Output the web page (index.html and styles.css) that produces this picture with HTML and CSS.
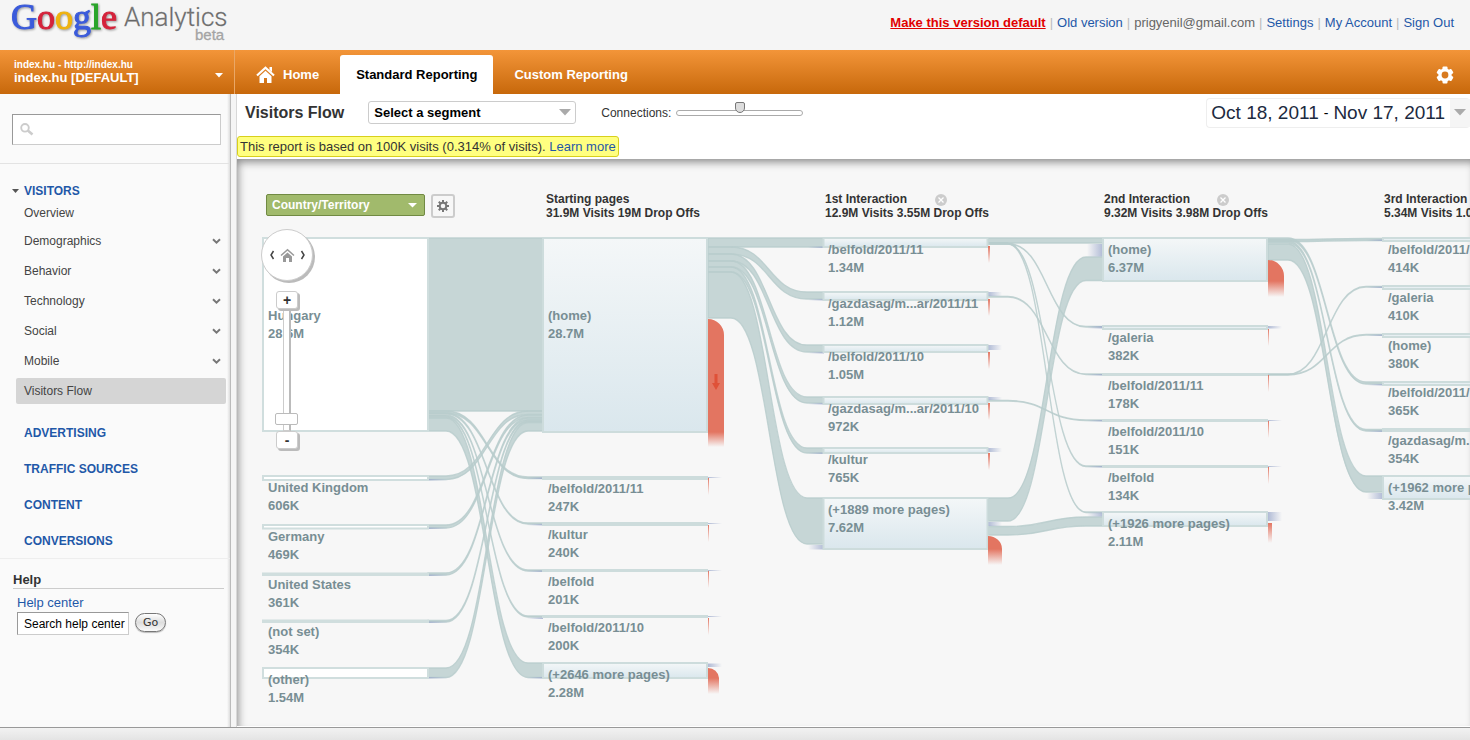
FILE: index.html
```html
<!DOCTYPE html>
<html lang="en">
<head>
<meta charset="utf-8">
<title>Visitors Flow - Google Analytics</title>
<link rel="stylesheet" href="styles.css">
</head>
<body>
<header class="top">
  <svg class="logo" width="232" height="46" role="img" aria-label="Google Analytics beta">
    <text class="logo-google" x="11" y="29"><tspan fill="#3b5bdb" stroke="#3b5bdb">G</tspan><tspan fill="#d5233b" stroke="#d5233b">o</tspan><tspan fill="#efb310" stroke="#efb310">o</tspan><tspan fill="#3b5bdb" stroke="#3b5bdb">g</tspan><tspan fill="#2ba52b" stroke="#2ba52b">l</tspan><tspan fill="#d5233b" stroke="#d5233b">e</tspan></text>
    <text class="logo-product" x="124" y="26">Analytics</text>
    <text class="logo-beta" x="195" y="40">beta</text>
  </svg>
  <nav class="account-links">
    <a class="promo" href="#">Make this version default</a><i>|</i><a href="#">Old version</a><i>|</i><span>prigyenil@gmail.com</span><i>|</i><a href="#">Settings</a><i>|</i><a href="#">My Account</a><i>|</i><a href="#">Sign Out</a>
  </nav>
</header>

<div class="bar">
  <button class="profile" type="button">
    <span class="profile-names"><small>index.hu - http://index.hu</small><b>index.hu [DEFAULT]</b></span>
    <svg width="8" height="5"><path d="M0 0h8L4 4.500z" fill="#fff"/></svg>
  </button>
  <nav class="tabs">
    <a class="tab tab-home" href="#"><svg width="19" height="17" viewBox="0 0 19 17"><path d="M1 9.500 9.500 1.800 18 9.500" fill="none" stroke="#fff" stroke-width="2.200"/><path d="M13.500 1h2.500v5l-2.500-2zM3.500 10.200l6-5.400 6 5.400V17H11v-5H8v5H3.500z" fill="#fff"/></svg>Home</a>
    <a class="tab tab-active" href="#">Standard Reporting</a>
    <a class="tab" href="#">Custom Reporting</a>
  </nav>
  <button class="settings" type="button" aria-label="Settings">
    <svg width="18" height="18" viewBox="-9 -9 18 18"><g fill="#fff"><rect x="-2.500" y="-8.500" width="5" height="17" rx="1"/><rect x="-2.500" y="-8.500" width="5" height="17" rx="1" transform="rotate(60)"/><rect x="-2.500" y="-8.500" width="5" height="17" rx="1" transform="rotate(120)"/><circle r="6.700"/></g><circle r="3.400" fill="#d87a1f"/></svg>
  </button>
</div>

<div class="body">
  <aside class="side">
    <div class="search-wrap">
      <label class="search"><svg width="14" height="13" viewBox="0 0 14 13"><circle cx="5" cy="4.800" r="3.800" fill="none" stroke="#ccc" stroke-width="1.900"/><path d="M7.800 7.500 12.500 11.500" stroke="#ccc" stroke-width="2.600"/></svg><input type="text" aria-label="Find report"></label>
    </div>
    <nav class="menu">
      <a class="group group-open" href="#"><svg width="7" height="4"><path d="M0 0h7L3.500 4z" fill="#555"/></svg>VISITORS</a>
      <a class="item item-first" href="#">Overview</a>
      <a class="item" href="#">Demographics<svg width="9" height="7"><path d="M1 1.200l3.500 3.500L8 1.200" /></svg></a>
      <a class="item" href="#">Behavior<svg width="9" height="7"><path d="M1 1.200l3.500 3.500L8 1.200" /></svg></a>
      <a class="item" href="#">Technology<svg width="9" height="7"><path d="M1 1.200l3.500 3.500L8 1.200" /></svg></a>
      <a class="item" href="#">Social<svg width="9" height="7"><path d="M1 1.200l3.500 3.500L8 1.200" /></svg></a>
      <a class="item" href="#">Mobile<svg width="9" height="7"><path d="M1 1.200l3.500 3.500L8 1.200" /></svg></a>
      <a class="item item-on" href="#">Visitors Flow</a>
      <div class="groups">
        <a class="group" href="#">ADVERTISING</a>
        <a class="group" href="#">TRAFFIC SOURCES</a>
        <a class="group" href="#">CONTENT</a>
        <a class="group" href="#">CONVERSIONS</a>
      </div>
    </nav>
    <section class="help">
      <h2>Help</h2>
      <a href="#">Help center</a>
      <form class="help-form"><input type="text" value="Search help center" aria-label="Search help center"><button type="button">Go</button></form>
    </section>
  </aside>

  <main class="main">
    <div class="report-head">
      <h1>Visitors Flow</h1>
      <div class="segment"><select aria-label="Segment"><option>Select a segment</option></select><svg width="12" height="7"><path d="M0 0h12L6 6.500z" fill="#aaa"/></svg></div>
      <label class="connections">Connections:<input type="range" min="0" max="100" value="50"></label>
      <button class="dates" type="button"><span>Oct 18, 2011</span><em>-</em><span>Nov 17, 2011</span><i><svg width="12" height="7"><path d="M0 0h12L6 6.500z" fill="#aaa"/></svg></i></button>
    </div>
    <p class="notice">This report is based on 100K visits (0.314% of visits). <a href="#">Learn more</a></p>

    <div class="canvas">
      <svg class="flow" width="100%" height="567">
        <defs>
          <linearGradient id="node" x1="0" y1="0" x2="0" y2="1"><stop offset="0" stop-color="#f4f7f8"/><stop offset="1" stop-color="#dae7ed"/></linearGradient>
          <linearGradient id="fade-r"><stop offset="0" stop-color="#98a6ca"/><stop offset="1" stop-color="#98a6ca" stop-opacity="0"/></linearGradient>
          <linearGradient id="fade-l"><stop offset="0" stop-color="#98a6ca" stop-opacity="0"/><stop offset="1" stop-color="#98a6ca"/></linearGradient>
          <linearGradient id="fade-d" x1="0" y1="0" x2="0" y2="1"><stop offset="0" stop-color="#e37561"/><stop offset="1" stop-color="#e37561" stop-opacity="0"/></linearGradient>
        </defs>
        <g transform="translate(-237 -159)">
          <g class="link">
            <path d="M428 238H543V411H428z"/>
            <path d="M428 411H446C487 411 487 477 528 477H543V478.500H528C487 478.500 487 413 446 413H428z"/>
            <path d="M428 413H446C487 413 487 523 528 523H543V524H528C487 524 487 414 446 414H428z"/>
            <path d="M428 415H446C487 415 487 570 528 570H543V571H528C487 571 487 416 446 416H428z"/>
            <path d="M428 416.500H446C487 416.500 487 616 528 616H543V617H528C487 617 487 417.500 446 417.500H428z"/>
            <path d="M428 418H446C487 418 487 663 528 663H543V677.500H528C487 677.500 487 431 446 431H428z"/>
            <path d="M428 476H446C487 476 487 411 528 411H543V414.500H528C487 414.500 487 479.500 446 479.500H428z"/>
            <path d="M428 525H446C487 525 487 415 528 415H543V417.500H528C487 417.500 487 528 446 528H428z"/>
            <path d="M428 573H446C487 573 487 418 528 418H543V420H528C487 420 487 575 446 575H428z"/>
            <path d="M428 620.500H446C487 620.500 487 420.500 528 420.500H543V422H528C487 422 487 622 446 622H428z"/>
            <path d="M428 668H446C487 668 487 422.500 528 422.500H543V431H528C487 431 487 677.500 446 677.500H428z"/>

            <path d="M708 238H824V247H708z"/>
            <path d="M708 247H731C769 247 769 292 807 292H824V299H807C769 299 769 254 731 254H708z"/>
            <path d="M708 254H731C769 254 769 345 807 345H824V352H807C769 352 769 261 731 261H708z"/>
            <path d="M708 261H731C769 261 769 397 807 397H824V403H807C769 403 769 267 731 267H708z"/>
            <path d="M708 267H731C769 267 769 448 807 448H824V453H807C769 453 769 272 731 272H708z"/>
            <path d="M708 272H731C769 272 769 498 807 498H824V544H807C769 544 769 318 731 318H708z"/>

            <path d="M988 238H1103V243H988z"/>
            <path d="M988 243.500H1008C1047 243.500 1047 326.500 1086 326.500H1103V327H1086C1047 327 1047 244 1008 244H988z"/>
            <path d="M988 243.500H1008C1047 243.500 1047 466 1086 466H1103V466.500H1086C1047 466.500 1047 244 1008 244H988z"/>
            <path d="M988 243.500H1008C1047 243.500 1047 512 1086 512H1103V512.500H1086C1047 512.500 1047 244 1008 244H988z"/>
            <path d="M988 296.500H1008C1047 296.500 1047 374 1086 374H1103V374.500H1086C1047 374.500 1047 297 1008 297H988z"/>
            <path d="M988 400.500H1008C1047 400.500 1047 420 1086 420H1103V420.500H1086C1047 420.500 1047 401 1008 401H988z"/>
            <path d="M988 498H1008C1047 498 1047 257 1086 257H1103V280.500H1086C1047 280.500 1047 521 1008 521H988z"/>
            <path d="M988 526.500H1008C1047 526.500 1047 517 1086 517H1103V526H1086C1047 526 1047 535 1008 535H988z"/>

            <path d="M1268 239.500H1288C1327 239.500 1327 238.500 1366 238.500H1383V240.500H1366C1327 240.500 1327 241.500 1288 241.500H1268z"/>
            <path d="M1268 238H1288C1327 238 1327 382 1366 382H1383V384H1366C1327 384 1327 240 1288 240H1268z"/>
            <path d="M1268 241H1288C1327 241 1327 429.500 1366 429.500H1383V431H1366C1327 431 1327 243 1288 243H1268z"/>
            <path d="M1268 244H1288C1327 244 1327 476 1366 476H1383V492H1366C1327 492 1327 260 1288 260H1268z"/>
            <path d="M1268 374H1288C1327 374 1327 286.500 1366 286.500H1383V287H1366C1327 287 1327 374.500 1288 374.500H1268z"/>
            <path d="M1268 374.500H1288C1327 374.500 1327 334.500 1366 334.500H1383V335H1366C1327 335 1327 375 1288 375H1268z"/>
          </g>

          <g class="in">
            <path d="M527 477.500h16v1.500h-16zM527 524h16v1.500h-16zM527 570.500h16v1.500h-16zM527 617.500h16v1.500h-16zM527 677h16v1.500h-16z"/>
            <path d="M808 246.500h16v1.500h-16zM808 299h16v1.500h-16zM808 352h16v1.500h-16zM808 403h16v1.500h-16zM808 452.500h16v1.500h-16zM808 545h16v4.500h-16z"/>
            <path d="M1087 244h16v12.500h-16zM1087 326h16v2.500h-16zM1087 374h16v1.500h-16zM1087 420h16v1.500h-16zM1087 466h16v1.500h-16zM1087 512.500h16v4h-16z"/>
            <path d="M1367 239.500h16v1.500h-16zM1367 286.500h16v1.500h-16zM1367 334.500h16v1.500h-16zM1367 384h16v1.500h-16zM1367 430.500h16v1.500h-16zM1367 493h16v6h-16z"/>
          </g>
          <g class="out">
            <path d="M428 479h20v1.500h-20zM428 527.500h20v1.500h-20zM428 574.500h20v1.500h-20zM428 621.500h20v1.500h-20zM428 677h20v1.500h-20z"/>
            <path d="M708 477h14v1h-14zM708 523h14v1h-14zM708 570h14v1h-14zM708 616h14v1h-14zM708 663.500h14v3.500h-14z"/>
            <path d="M988 292h14v4h-14zM988 345h14v5h-14zM988 397h14v3h-14zM988 448h14v4h-14zM988 522h14v4h-14z"/>
            <path d="M1268 326h14v2.500h-14zM1268 420h14v1h-14zM1268 466h14v1h-14zM1268 512h14v9h-14z"/>
          </g>

          <g class="country">
            <path d="M263 238H428V431H263zM263 476H428V480H263zM263 525H428V528.500H263zM263 573.500H428V575H263zM263 620.500H428V622H263zM263 668H428V678H263z"/>
          </g>
          <g class="page">
            <rect x="543" y="238" width="164" height="194"/>
            <rect x="543" y="477" width="164" height="2"/>
            <rect x="543" y="523" width="164" height="2"/>
            <rect x="543" y="570" width="164" height="1"/>
            <rect x="543" y="616" width="164" height="1"/>
            <rect x="543" y="663" width="164" height="15"/>
            <rect x="823.500" y="238" width="164" height="9"/>
            <rect x="823.500" y="292" width="164" height="8"/>
            <rect x="823.500" y="345" width="164" height="7"/>
            <rect x="823.500" y="397" width="164" height="7"/>
            <rect x="823.500" y="448" width="164" height="5"/>
            <rect x="823.500" y="498" width="164" height="51"/>
            <rect x="1103" y="238" width="164" height="43"/>
            <rect x="1103" y="326" width="164" height="3"/>
            <rect x="1103" y="374" width="164" height="1"/>
            <rect x="1103" y="420" width="164" height="1"/>
            <rect x="1103" y="466" width="164" height="1"/>
            <rect x="1103" y="512" width="164" height="14"/>
            <rect x="1383" y="238" width="164" height="3"/>
            <rect x="1383" y="286" width="164" height="3"/>
            <rect x="1383" y="334" width="164" height="3"/>
            <rect x="1383" y="382" width="164" height="3"/>
            <rect x="1383" y="429" width="164" height="2"/>
            <rect x="1383" y="476" width="164" height="23"/>
          </g>

          <g class="drop">
            <path d="M708 319A16 16 0 0 1 724 335V432H708zM708 668A11 11 0 0 1 719 678H708zM988 536A14 13 0 0 1 1002 549H988zM1268 260A16 16 0 0 1 1284 276V281H1268z"/>
            <path d="M714.500 374h3v9h2.500l-4 7-4-7h2.500z" fill="#df5138"/>
          </g>
          <g class="drop-fade">
            <rect x="708" y="432" width="16" height="15"/><rect x="708" y="678" width="11" height="16"/><rect x="988" y="549" width="14" height="16"/><rect x="1268" y="281" width="16" height="16"/><rect x="1268" y="523" width="4" height="20"/>
            <rect x="708" y="478" width="1" height="17"/><rect x="708" y="525" width="1" height="17"/><rect x="708" y="571" width="1" height="17"/><rect x="708" y="618" width="1" height="17"/>
            <rect x="988" y="246" width="2" height="17"/><rect x="988" y="299" width="2" height="17"/><rect x="988" y="352" width="2" height="17"/><rect x="988" y="403" width="2" height="17"/><rect x="988" y="453" width="2" height="17"/>
            <rect x="1268" y="329" width="1" height="17"/><rect x="1268" y="375" width="1" height="17"/><rect x="1268" y="421" width="1" height="17"/><rect x="1268" y="467" width="1" height="17"/>
          </g>

          <g class="label">
            <text x="268" y="320">Hungary</text><text x="268" y="338">28.6M</text>
            <text x="268" y="492">United Kingdom</text><text x="268" y="510">606K</text>
            <text x="268" y="541">Germany</text><text x="268" y="559">469K</text>
            <text x="268" y="589">United States</text><text x="268" y="607">361K</text>
            <text x="268" y="636">(not set)</text><text x="268" y="654">354K</text>
            <text x="268" y="684">(other)</text><text x="268" y="702">1.54M</text>

            <text x="548" y="320">(home)</text><text x="548" y="338">28.7M</text>
            <text x="548" y="493">/belfold/2011/11</text><text x="548" y="511">247K</text>
            <text x="548" y="539">/kultur</text><text x="548" y="557">240K</text>
            <text x="548" y="586">/belfold</text><text x="548" y="604">201K</text>
            <text x="548" y="632">/belfold/2011/10</text><text x="548" y="650">200K</text>
            <text x="548" y="679">(+2646 more pages)</text><text x="548" y="697">2.28M</text>

            <text x="828" y="254">/belfold/2011/11</text><text x="828" y="272">1.34M</text>
            <text x="828" y="308">/gazdasag/m...ar/2011/11</text><text x="828" y="326">1.12M</text>
            <text x="828" y="361">/belfold/2011/10</text><text x="828" y="379">1.05M</text>
            <text x="828" y="413">/gazdasag/m...ar/2011/10</text><text x="828" y="431">972K</text>
            <text x="828" y="464">/kultur</text><text x="828" y="482">765K</text>
            <text x="828" y="514">(+1889 more pages)</text><text x="828" y="532">7.62M</text>

            <text x="1108" y="254">(home)</text><text x="1108" y="272">6.37M</text>
            <text x="1108" y="342">/galeria</text><text x="1108" y="360">382K</text>
            <text x="1108" y="390">/belfold/2011/11</text><text x="1108" y="408">178K</text>
            <text x="1108" y="436">/belfold/2011/10</text><text x="1108" y="454">151K</text>
            <text x="1108" y="482">/belfold</text><text x="1108" y="500">134K</text>
            <text x="1108" y="528">(+1926 more pages)</text><text x="1108" y="546">2.11M</text>

            <text x="1388" y="254">/belfold/2011/11</text><text x="1388" y="272">414K</text>
            <text x="1388" y="302">/galeria</text><text x="1388" y="320">410K</text>
            <text x="1388" y="350">(home)</text><text x="1388" y="368">380K</text>
            <text x="1388" y="397">/belfold/2011/10</text><text x="1388" y="415">365K</text>
            <text x="1388" y="445">/gazdasag/m...ar/2011/11</text><text x="1388" y="463">354K</text>
            <text x="1388" y="492">(+1962 more pages)</text><text x="1388" y="510">3.42M</text>
          </g>
          <g class="heading">
            <text x="546" y="203">Starting pages</text><text x="546" y="217">31.9M Visits 19M Drop Offs</text>
            <text x="825" y="203">1st Interaction</text><text x="825" y="217">12.9M Visits 3.55M Drop Offs</text>
            <text x="1104" y="203">2nd Interaction</text><text x="1104" y="217">9.32M Visits 3.98M Drop Offs</text>
            <text x="1384" y="203">3rd Interaction</text><text x="1384" y="217">5.34M Visits 1.03M Drop Offs</text>
          </g>
        </g>
      </svg>

      <div class="dimension">
        <div class="dimension-pick"><select aria-label="Dimension"><option>Country/Territory</option></select><svg width="9" height="5"><path d="M0 0h9L4.500 4.500z" fill="#fff"/></svg></div>
        <button type="button" aria-label="Dimension settings"><svg width="14" height="14" viewBox="-7 -7 14 14"><g fill="#777"><path d="M-1-6h2V6h-2zM-6-1H6v2H-6z"/><path d="M-1-6h2V6h-2zM-6-1H6v2H-6z" transform="rotate(45)"/></g><circle r="3.300" fill="#f7f7f7" stroke="#777" stroke-width="2"/></svg></button>
      </div>
      <button class="close close-1" type="button" aria-label="Remove 1st Interaction"><svg width="12" height="12"><circle cx="6" cy="6" r="6" fill="#ccc"/><path d="M3.500 3.500l5 5M8.500 3.500l-5 5" stroke="#fff" stroke-width="1.300"/></svg></button>
      <button class="close close-2" type="button" aria-label="Remove 2nd Interaction"><svg width="12" height="12"><circle cx="6" cy="6" r="6" fill="#ccc"/><path d="M3.500 3.500l5 5M8.500 3.500l-5 5" stroke="#fff" stroke-width="1.300"/></svg></button>

      <div class="navigator">
        <div class="pan">
          <button type="button" aria-label="Left"><svg width="6" height="10"><path d="M4.500 1 2 5l2.500 4"/></svg></button>
          <button type="button" aria-label="Home"><svg width="15" height="14" viewBox="0 0 15 14"><path class="roof" d="M1 7.500 7.500 1.700 14 7.500"/><path class="walls" d="M3 8.500l4.500-4L12 8.500V14H9v-4H6v4H3z"/></svg></button>
          <button type="button" aria-label="Right"><svg width="6" height="10"><path d="M1.500 1 4 5 1.500 9"/></svg></button>
        </div>
        <button class="step" type="button">+</button>
        <input class="zoom" type="range" min="0" max="100" value="5" aria-label="Zoom">
        <button class="step" type="button">-</button>
      </div>
    </div>
  </main>
</div>
<footer class="foot"></footer>
</body>
</html>
```
FILE: styles.css
```css
* { box-sizing: border-box; }
body {
  margin: 0;
  min-height: 100vh;
  display: flex;
  flex-direction: column;
  overflow: hidden;
  background: #f5f5f5;
  color: #333;
  font: 13px/16px "Liberation Sans", Arial, sans-serif;
}
a { color: #1f58a8; text-decoration: none; }
button, input, select { font: inherit; color: inherit; margin: 0; }
button { padding: 0; border: 0; background: none; cursor: pointer; }
svg { display: block; flex: none; }

/* Header */
.top { display: flex; justify-content: space-between; height: 50px; padding-right: 16px; }
.logo-google { font: 36px "Liberation Serif", serif; stroke-width: 1px; filter: drop-shadow(1px 1px 1px #999); }
.logo-product { font: 300 26px Roboto, sans-serif; fill: #666; stroke: #888; stroke-width: 0.3px; }
.logo-beta { font: 15px "Liberation Sans", sans-serif; fill: #a4a4a4; stroke: #a4a4a4; stroke-width: 0.3px; }
.account-links { padding-top: 15px; color: #666; white-space: nowrap; }
.account-links i { padding: 0 4px; color: #bbb; font-style: normal; }
.account-links .promo { color: #e10000; font-weight: bold; text-decoration: underline; }

/* Orange bar */
.bar { display: flex; height: 44px; background: linear-gradient(#f39539, #c7680b); color: #fff; }
.profile {
  display: flex;
  align-items: center;
  justify-content: space-between;
  width: 235px;
  padding: 6px 11px 0 14px;
  border-right: 1px solid #eaa766;
  text-align: left;
}
.profile-names { display: flex; flex-direction: column; align-self: start; padding-top: 3px; }
.profile small { font-size: 10px; line-height: 12px; font-weight: bold; }
.profile b { line-height: 14px; }
.tabs { display: flex; align-items: flex-end; flex: 1; }
.tab { display: flex; align-items: center; gap: 8px; height: 39px; padding: 0 21px; color: #fff; font-weight: bold; }
.tab-active { padding: 0 16px; border-radius: 3px 3px 0 0; background: #fff; color: #000; }
.settings { padding: 6px 16px 0 0; }

/* Sidebar */
.body { display: flex; flex: 1; border-bottom: 1px solid #999; }
.side {
  width: 231px;
  margin-right: 5px;
  flex: none;
  border-right: 1px solid #bbb;
  background: linear-gradient(to left, #ddd, #fafafa 3px);
}
.search-wrap { padding: 20px 9px 18px 12px; border-bottom: 1px solid #e3e3e3; }
.search {
  display: flex;
  align-items: center;
  height: 31px;
  padding: 0 7px;
  border: 1px solid #ccc;
  border-top-color: #999;
  border-left-color: #999;
  background: #fff;
}
.search input { flex: 1; min-width: 0; border: 0; outline: 0; background: none; }
.menu { padding: 19px 4px 9px 0; border-bottom: 1px solid #eee; font-size: 12px; }
.group { display: block; padding-left: 24px; font-weight: bold; }
.group-open { display: flex; align-items: center; gap: 5px; padding-left: 12px; }
.item {
  display: flex;
  align-items: center;
  justify-content: space-between;
  height: 26px;
  margin: 0 0 4px 16px;
  padding: 0 5px 0 8px;
  border-radius: 2px;
  color: #444;
}
.item-first { margin-top: 1px; margin-bottom: 2px; }
.item svg { fill: none; stroke: #777; stroke-width: 2px; }
.item-on { background: #d5d5d5; }
.groups { display: grid; gap: 20px; margin-top: 21px; }
.help { padding: 13px 6px 0 13px; }
.help h2 { margin: 0 0 6px; border-bottom: 1px solid #ccc; font-size: 13px; line-height: 16px; }
.help a { margin-left: 4px; }
.help-form { display: flex; align-items: flex-start; gap: 6px; margin: 1px 0 0 4px; font-size: 12px; }
.help-form input {
  width: 112px;
  height: 23px;
  padding: 0 0 0 6px;
  border: 1px solid #ccc;
  border-top-color: #999;
  border-left-color: #999;
  background: #fff;
  color: #000;
}
.help-form button {
  height: 19px;
  margin-top: 1px;
  padding: 0 7px;
  border: 1px solid #777;
  border-radius: 10px;
  background: linear-gradient(#fff, #ddd 50%, #fafafa);
  box-shadow: 0 1px 1px #bbb;
  font: 11px "DejaVu Sans", sans-serif;
}

/* Report */
.main { flex: 1; min-width: 0; border-left: 1px solid #d8d8d8; background: #fff; }
.report-head { display: flex; align-items: center; height: 42px; padding: 0 0 5px 8px; }
.report-head h1 { margin: 0 24px 0 0; font-size: 16px; }
.segment { display: flex; align-items: center; width: 208px; height: 23px; padding: 0 4px 0 5px; border: 1px solid #ccc; border-radius: 3px; }
.segment select, .dimension select { flex: 1; min-width: 0; padding: 0; border: 0; appearance: none; background: none; font-weight: bold; }
.segment select { color: #000; }
.connections { display: flex; align-items: center; gap: 5px; margin-left: 25px; font-size: 12px; }
.connections input { width: 127px; height: 24px; appearance: none; background: none; }
.connections input::-webkit-slider-runnable-track { height: 6px; border: 1px solid #aaa; border-radius: 3px; background: #fff; }
.connections input::-webkit-slider-thumb { appearance: none; width: 10px; height: 11px; margin-top: -9px; border: 1px solid #777; border-radius: 2px 2px 5px 5px; background: #ddd; }
.dates {
  display: flex;
  align-items: center;
  gap: 5px;
  height: 30px;
  margin-left: auto;
  padding-left: 4px;
  border: 1px solid #eee;
  border-right: 0;
  border-radius: 4px;
  color: #1c2a40;
  font-size: 19px;
  white-space: nowrap;
}
.dates em { color: #000; font-style: normal; font-size: 14px; }
.dates i { display: flex; align-items: center; align-self: stretch; padding: 0 4px; background: #f5f5f5; }
.notice {
  width: fit-content;
  margin: 0 0 2px;
  padding: 2px 2px 1px;
  border: 1px solid #d8d01c;
  border-radius: 3px;
  background: #ffff80;
  line-height: 16px;
}

/* Flow chart */
.canvas { position: relative; border-bottom: 1px solid #fff; background: #f7f7f7; box-shadow: inset 3px 5px 8px -2px #888; }
.flow { overflow: hidden; }
.link { fill: #b8cdcd; fill-opacity: .78; stroke: #b8cdcd; stroke-opacity: .85; stroke-width: 1.3px; }
.country { fill: #fff; stroke: #d0dede; stroke-width: 2px; }
.page { fill: url(#node); stroke: #cddcdc; stroke-width: 2px; }
.in { fill: url(#fade-l); opacity: .75; }
.out { fill: url(#fade-r); opacity: .75; }
.drop { fill: #e37561; }
.drop-fade { fill: url(#fade-d); }
.label { fill: #788e94; font-weight: bold; font-size: 13px; }
.heading { fill: #333; font-weight: bold; font-size: 12px; }
.dimension { position: absolute; top: 35px; left: 29px; display: flex; gap: 6px; }
.dimension-pick {
  display: flex;
  align-items: center;
  width: 159px;
  height: 22px;
  padding: 0 7px 0 5px;
  border: 1px solid #718a43;
  border-radius: 2px;
  background: #a1ba6c;
  color: #fff;
  font-size: 12px;
}
.dimension button { display: grid; place-items: center; width: 24px; height: 24px; border: 2px solid #ccc; border-radius: 3px; }
.close { position: absolute; top: 35px; }
.close-1 { left: 698px; }
.close-2 { left: 980px; }
.navigator { position: absolute; top: 70px; left: 24px; display: flex; flex-direction: column; align-items: center; }
.pan {
  display: flex;
  align-items: center;
  justify-content: center;
  gap: 5px;
  width: 52px;
  height: 52px;
  margin-bottom: 10px;
  border: 1px solid #ccc;
  border-radius: 50%;
  background: #fff;
  box-shadow: 2px 2px 0 #bbb;
}
.pan svg { fill: none; stroke: #444; stroke-width: 1.5px; }
.pan .roof { stroke: #999; }
.pan .walls { fill: #999; stroke: none; }
.step {
  position: relative;
  width: 22px;
  height: 18px;
  border: 1px solid #ccc;
  border-radius: 3px;
  background: #fff;
  box-shadow: 2px 2px 0 #bbb;
  font-weight: bold;
  font-size: 14px;
  line-height: 14px;
}
.zoom { width: 24px; height: 122px; appearance: none; background: none; writing-mode: vertical-lr; direction: rtl; }
.zoom::-webkit-slider-runnable-track { width: 8px; border: 1px solid #ccc; border-right: 2px solid #bbb; background: #fff; }
.zoom::-webkit-slider-thumb { appearance: none; width: 23px; height: 12px; margin-left: -9px; border: 1px solid #bbb; border-radius: 2px; background: #fff; }

.foot { height: 12px; background: linear-gradient(#f2f2f2, #e4e4e4); }
```
